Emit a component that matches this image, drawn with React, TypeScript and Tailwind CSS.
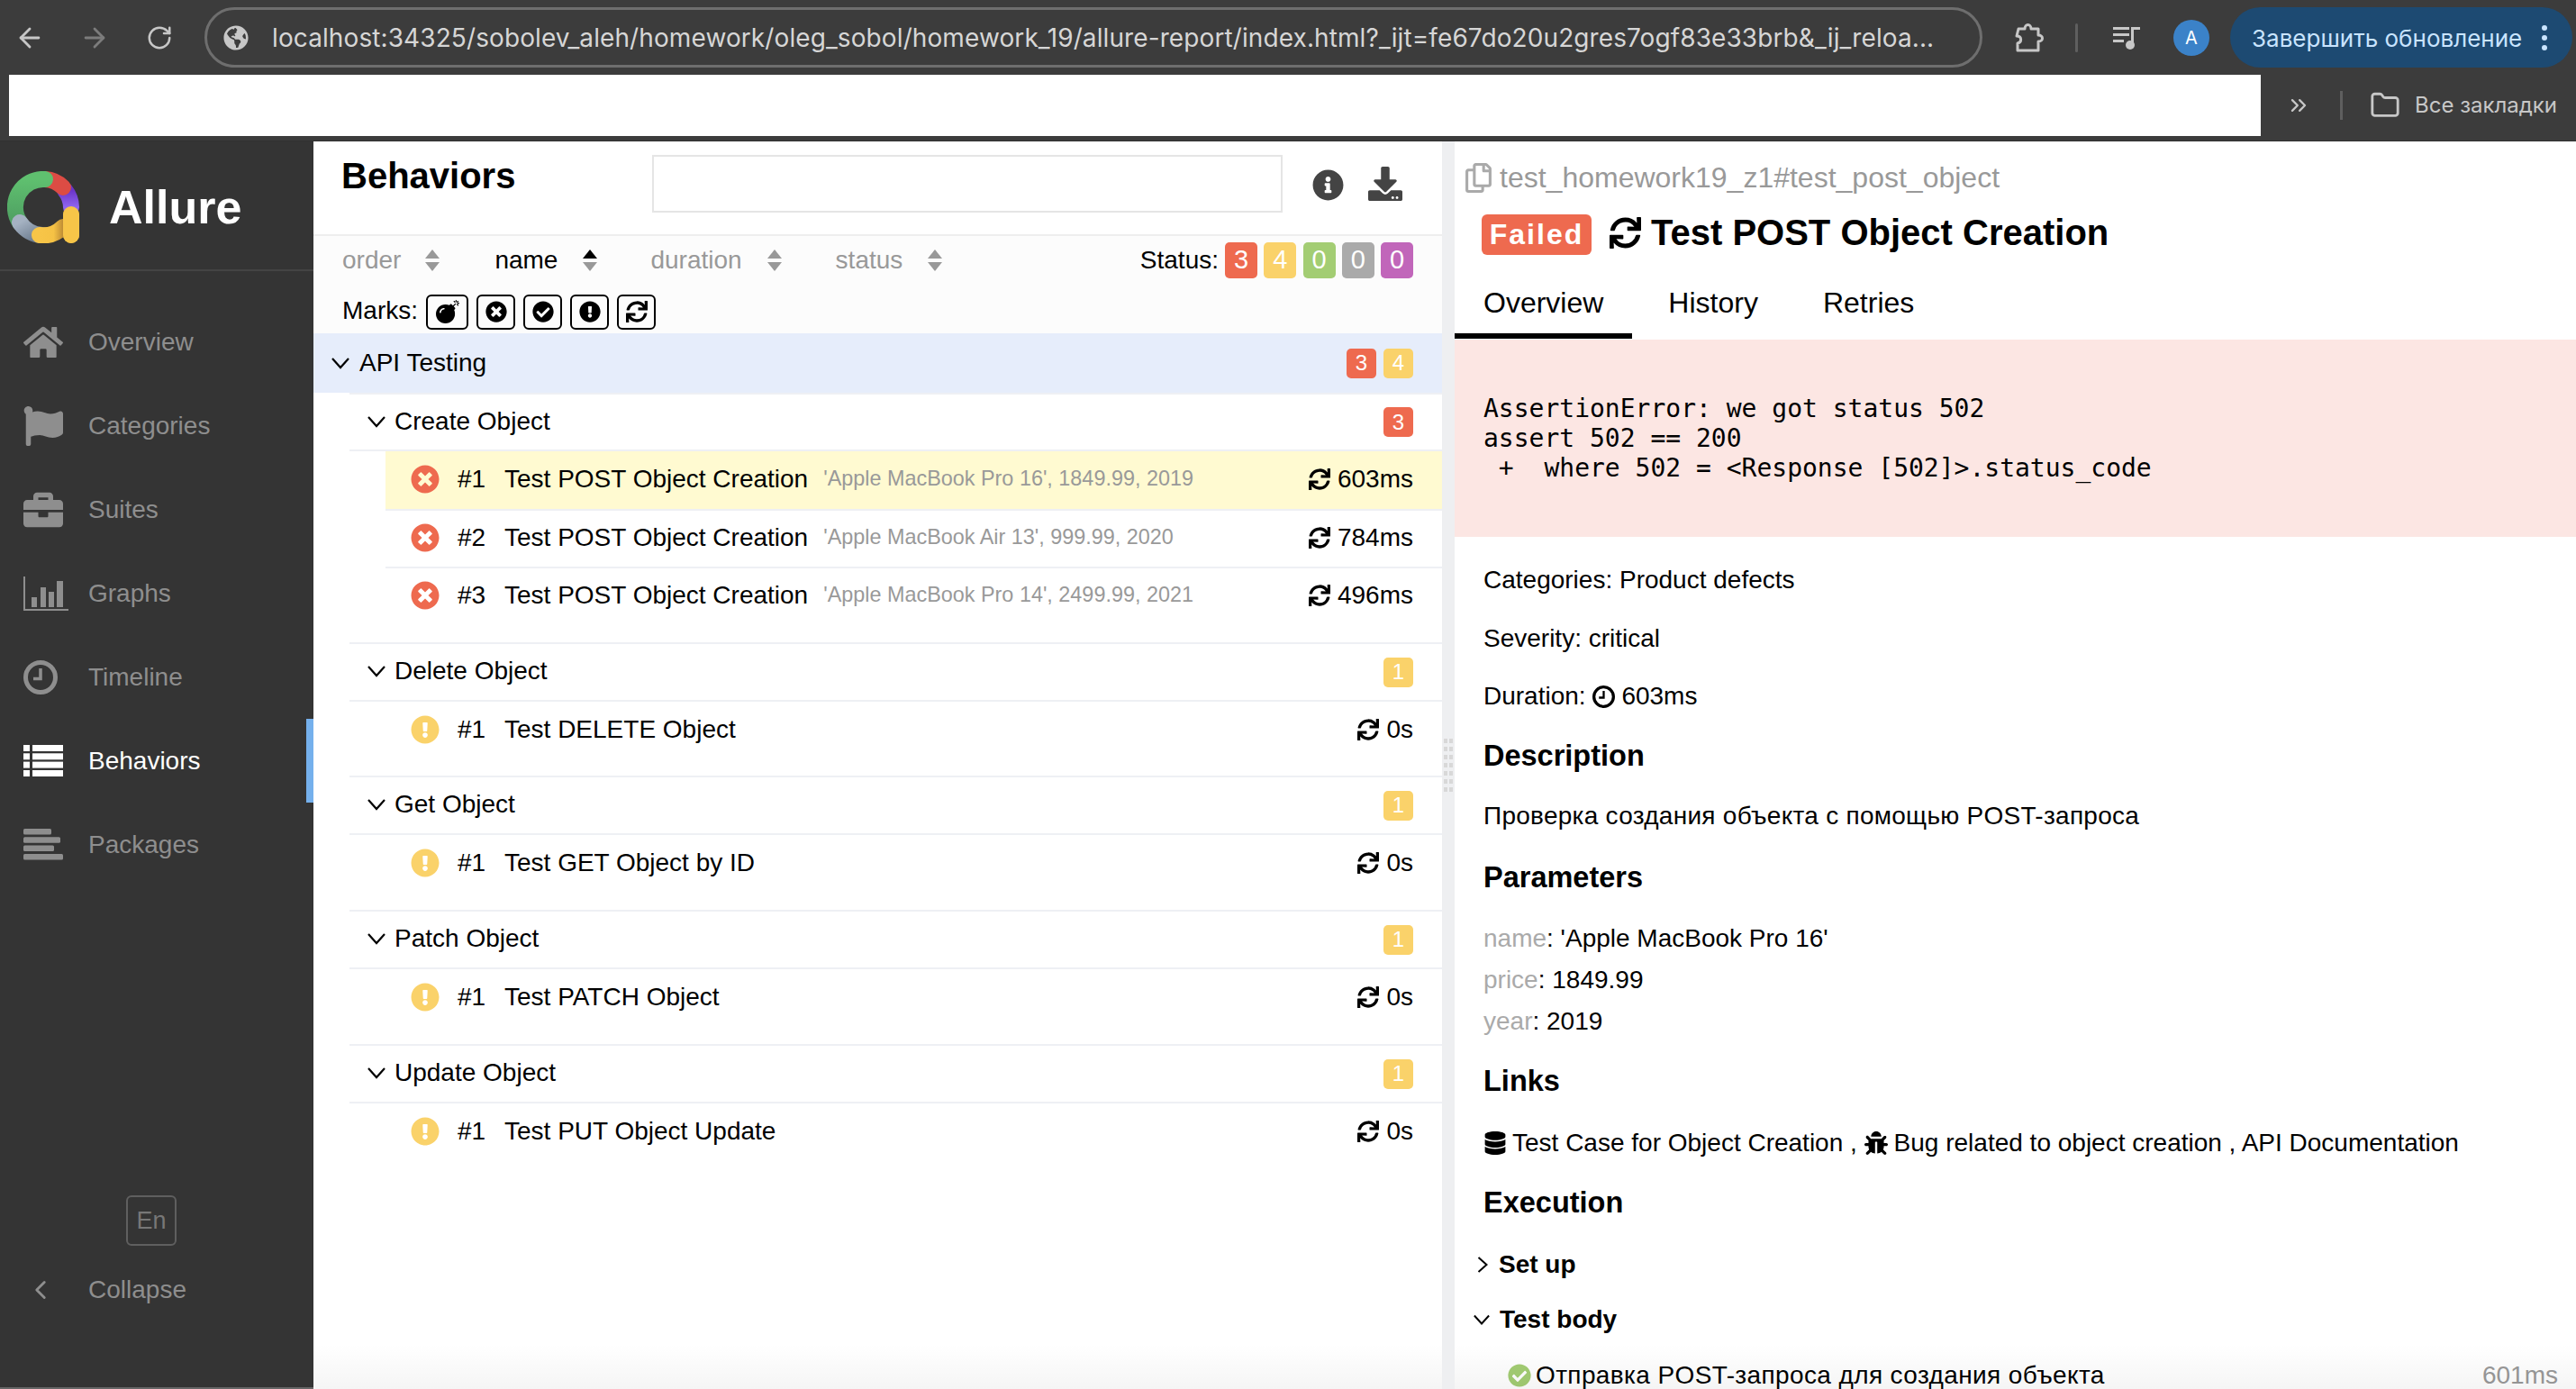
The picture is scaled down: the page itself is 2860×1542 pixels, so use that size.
import React from "react";
import { ArrowLeft, ArrowRight, RotateCw, ChevronsRight, Folder, ChevronLeft } from "lucide-react";
import {
  FaGlobeAmericas, FaHome, FaFlag, FaBriefcase, FaInfoCircle, FaDownload,
  FaBomb, FaTimesCircle, FaCheckCircle, FaExclamationCircle, FaSync, FaDatabase, FaBug, FaRegCopy,
} from "react-icons/fa";

const RED = "bg-[#ee6a4f]";
const YEL = "bg-[#fad26a]";

function Logo() {
  const c = { fill: "none", strokeWidth: 18, strokeLinecap: "round" as const };
  return (
    <svg width="80" height="80" viewBox="8 10 80 80">
      <defs>
        <linearGradient id="g1" x1="0" y1="0" x2="0" y2="1">
          <stop offset="0" stopColor="#5fc06f" />
          <stop offset="1" stopColor="#4f9f62" />
        </linearGradient>
        <linearGradient id="g2" x1="0" y1="0" x2="1" y2="0">
          <stop offset="0" stopColor="#f7c548" />
          <stop offset="0.6" stopColor="#f5c245" />
          <stop offset="1" stopColor="#bf8d35" />
        </linearGradient>
        <linearGradient id="g3" x1="0" y1="0" x2="1" y2="1">
          <stop offset="0" stopColor="#a5b2c2" />
          <stop offset="1" stopColor="#6f7f92" />
        </linearGradient>
        <linearGradient id="g4" x1="0" y1="0" x2="0" y2="1">
          <stop offset="0" stopColor="#6b34c8" />
          <stop offset="1" stopColor="#8f65f0" />
        </linearGradient>
      </defs>
      <path d="M79 60 L79 81" stroke="#f7c548" {...c} />
      <path d="M72 31 A31 31 0 0 1 79 50" stroke="url(#g4)" {...c} />
      <path d="M50 19 A31 31 0 0 1 70 28" stroke="#dc4c44" {...c} />
      <path d="M22 67 A31 31 0 0 1 50 19" stroke="url(#g1)" {...c} />
      <path d="M47 81 A31 31 0 0 1 22 67" stroke="url(#g3)" {...c} />
      <path d="M70 72 A31 31 0 0 1 44 81" stroke="url(#g2)" {...c} />
      <path d="M79 58 L79 81" stroke="#f7c548" {...c} />
    </svg>
  );
}

function ListIcon() {
  return (
    <svg width="44" height="35" viewBox="0 0 44 35" fill="currentColor">
      <rect x="0" y="0" width="7" height="7" />
      <rect x="10" y="0" width="34" height="7" />
      <rect x="0" y="9.3" width="7" height="7" />
      <rect x="10" y="9.3" width="34" height="7" />
      <rect x="0" y="18.6" width="7" height="7" />
      <rect x="10" y="18.6" width="34" height="7" />
      <rect x="0" y="28" width="7" height="7" />
      <rect x="10" y="28" width="34" height="7" />
    </svg>
  );
}

function PackagesIcon() {
  return (
    <svg width="44" height="35" viewBox="0 0 44 35" fill="currentColor">
      <rect x="0" y="0" width="31" height="6.5" rx="1.5" />
      <rect x="0" y="9.3" width="41" height="6.5" rx="1.5" />
      <rect x="0" y="18.6" width="34" height="6.5" rx="1.5" />
      <rect x="0" y="28" width="44" height="6.5" rx="1.5" />
    </svg>
  );
}

function GraphIcon() {
  return (
    <svg width="50" height="38" viewBox="0 0 50 38" fill="currentColor">
      <rect x="0" y="0" width="2" height="38" />
      <rect x="0" y="36" width="50" height="2" />
      <rect x="9" y="23" width="6" height="11" />
      <rect x="19" y="12" width="6" height="22" />
      <rect x="28" y="17" width="6" height="17" />
      <rect x="37" y="5" width="7" height="29" />
    </svg>
  );
}

function ClockIcon({ size, className = "" }: { size: number; className?: string }) {
  return (
    <svg width={size} height={size} viewBox="0 0 38 38" fill="none" stroke="currentColor" className={className}>
      <circle cx="19" cy="19" r="16.5" strokeWidth="5" />
      <path d="M19 9 V20.5 H11" strokeWidth="3.5" />
    </svg>
  );
}

function SortArrows({ active }: { active?: boolean }) {
  return (
    <svg width="18" height="24" viewBox="0 0 18 24" className="shrink-0">
      <path d="M9 0 L17 10 L1 10 Z" fill={active ? "#000" : "#999"} />
      <path d="M9 24 L17 14 L1 14 Z" fill="#999" />
    </svg>
  );
}

function Chevron({ open = true, className = "" }: { open?: boolean; className?: string }) {
  return (
    <svg width="20" height="20" viewBox="0 0 20 20" className={className} fill="none" stroke="#000" strokeWidth="2.2">
      {open ? <path d="M1 5 L10 15 L19 5" /> : <path d="M5 1 L15 10 L5 19" />}
    </svg>
  );
}

function PuzzleIcon() {
  return (
    <svg width="34" height="34" viewBox="0 0 34 34" fill="none" stroke="#c7c7c7" strokeWidth="3" strokeLinejoin="round">
      <path d="M5 7 H12 C12 1 19 1 19 7 H27 V14 C33 14 33 21 27 21 V31 H4 V23 C9 22 9 15 3 15 Z" />
    </svg>
  );
}

function MediaIcon() {
  return (
    <svg width="32" height="32" viewBox="0 0 32 32" fill="#c7c7c7">
      <rect x="1" y="4" width="18" height="3" />
      <rect x="1" y="11" width="18" height="3" />
      <rect x="1" y="18" width="12" height="3" />
      <rect x="21" y="4" width="10" height="3" />
      <rect x="21" y="4" width="3" height="20" />
      <circle cx="20" cy="24" r="5" />
    </svg>
  );
}

function Toolbar() {
  return (
    <div className="h-[83px] bg-[#3c3c3c] flex items-center shrink-0">
      <ArrowLeft className="ml-[16px] text-[#c7c7c7]" size={34} strokeWidth={2} />
      <ArrowRight className="ml-[38px] text-[#7c7c7c]" size={34} strokeWidth={2} />
      <RotateCw className="ml-[40px] text-[#c7c7c7]" size={30} strokeWidth={2} />
      <div className="ml-[35px] w-[1974px] h-[67px] rounded-[34px] border-[3px] border-[#6e6e6e] flex items-center pl-[18px] shrink-0">
        <FaGlobeAmericas className="text-[#c7c7c7] shrink-0" size={28} />
        <span className="ml-[26px] text-[#d6d6d6] text-[28px] whitespace-nowrap font-['Inter',sans-serif] tracking-[0.1px]">
          localhost:34325/sobolev_aleh/homework/oleg_sobol/homework_19/allure-report/index.html?_ijt=fe67do20u2gres7ogf83e33brb&_ij_reloa...
        </span>
      </div>
      <div className="ml-[35px]"><PuzzleIcon /></div>
      <div className="ml-[34px] w-[3px] h-[32px] bg-[#5f5f5f] rounded" />
      <div className="ml-[38px]"><MediaIcon /></div>
      <div className="ml-[36px] w-[40px] h-[40px] rounded-full bg-[#3b82c8] text-white flex items-center justify-center text-[20px] font-['Inter',sans-serif]">A</div>
      <div className="ml-[23px] w-[380px] h-[67px] rounded-[34px] bg-[#1d4a72] text-[#c9e4ff] flex items-center pl-[24px] shrink-0">
        <span className="pt-[2px] text-[26px] whitespace-nowrap font-['Inter',sans-serif]">Завершить обновление</span>
        <span className="ml-auto mr-[28px] flex flex-col gap-[5px]">
          <span className="w-[6px] h-[6px] rounded-full bg-[#c9e4ff]" />
          <span className="w-[6px] h-[6px] rounded-full bg-[#c9e4ff]" />
          <span className="w-[6px] h-[6px] rounded-full bg-[#c9e4ff]" />
        </span>
      </div>
    </div>
  );
}

function BookmarksBar() {
  return (
    <div className="h-[74px] bg-[#3c3c3c] shrink-0 flex items-start border-b border-[#303030]">
      <div className="ml-[10px] w-[2500px] h-[68px] bg-white shrink-0" />
      <div className="h-[68px] flex items-center text-[#c7c7c7]">
        <ChevronsRight className="ml-[28px]" size={28} strokeWidth={2} />
        <div className="ml-[32px] w-[3px] h-[32px] bg-[#5f5f5f]" />
        <Folder className="ml-[30px]" size={34} strokeWidth={2} />
        <span className="ml-[16px] text-[24px] whitespace-nowrap font-['Inter',sans-serif]">Все закладки</span>
      </div>
    </div>
  );
}

const navItems: [string, React.ReactNode, boolean?][] = [
  ["Overview", <FaHome size={44} />],
  ["Categories", <FaFlag size={44} />],
  ["Suites", <FaBriefcase size={44} />],
  ["Graphs", <GraphIcon />],
  ["Timeline", <ClockIcon size={38} />],
  ["Behaviors", <ListIcon />, true],
  ["Packages", <PackagesIcon />],
];

function Sidebar() {
  return (
    <aside className="w-[348px] shrink-0 bg-[#343434] flex flex-col border-b-2 border-[#666]">
      <div className="h-[144px] flex items-center border-b-2 border-[#444] pl-[8px] pt-[4px]">
        <Logo />
        <span className="ml-[33px] text-white text-[52px] font-bold leading-none">Allure</span>
      </div>
      <nav className="mt-[32px] flex flex-col">
        {navItems.map(([label, icon, active]) => (
          <div
            key={label}
            className={
              active
                ? "h-[93px] flex items-center pl-[26px] text-white border-r-[8px] border-[#75b0ec]"
                : "h-[93px] flex items-center pl-[26px] text-[#8e8e8e]"
            }
          >
            <span className="w-[72px] flex items-center shrink-0">{icon}</span>
            <span className="text-[28px]">{label}</span>
          </div>
        ))}
      </nav>
      <div className="mt-auto mb-[62px] flex flex-col">
        <div className="ml-[140px] mb-[2px] w-[56px] h-[56px] rounded-[6px] border-2 border-[#5f5f5f] flex items-center justify-center text-[#777] text-[27px]">En</div>
        <div className="h-[93px] flex items-center pl-[28px] text-[#8e8e8e]">
          <span className="w-[70px] shrink-0"><ChevronLeft size={34} strokeWidth={2} /></span>
          <span className="text-[28px]">Collapse</span>
        </div>
      </div>
    </aside>
  );
}

function Count({ n, cls }: { n: string; cls: string }) {
  return (
    <span className={`w-[33px] h-[33px] rounded-[5px] text-white text-[24px] flex items-center justify-center ${cls}`}>{n}</span>
  );
}

function StatusBadge({ n, cls }: { n: string; cls: string }) {
  return (
    <span className={`w-[36px] h-[40px] rounded-[5px] text-white text-[29px] flex items-center justify-center ${cls}`}>{n}</span>
  );
}

function Mark({ children, wide }: { children: React.ReactNode; wide?: boolean }) {
  return (
    <span className={`${wide ? "w-[47px]" : "w-[43px]"} h-[39px] rounded-[6px] border-2 border-black flex items-center justify-center`}>{children}</span>
  );
}

function TestRow({ num, name, params, time, kind, active, first }: {
  num: string; name: string; params?: string; time: string; kind: "fail" | "warn"; active?: boolean; first?: boolean;
}) {
  return (
    <div
      className={
        (active ? "bg-[#fffad1] " : "") +
        (first ? "" : "border-t-2 border-[#eef0f4] ") +
        "ml-[40px] h-[64px] flex items-center pl-[28px] pr-[32px] pb-[2px] text-[28px]"
      }
    >
      {kind === "fail" ? (
        <FaTimesCircle size={32} className="text-[#ee6a4f] shrink-0" />
      ) : (
        <FaExclamationCircle size={32} className="text-[#fad26a] shrink-0" />
      )}
      <span className="ml-[20px] w-[52px] shrink-0">{num}</span>
      <span className="whitespace-nowrap">{name}</span>
      {params && <span className="ml-[17px] text-[23.4px] text-[#999] whitespace-nowrap">{params}</span>}
      <span className="ml-auto flex items-center gap-[8px]">
        <FaSync size={24} />
        {time}
      </span>
    </div>
  );
}

function Group({ title, badge, badgeCls, children, className = "", headerH = "h-[66px]" }: {
  title: string; badge: string; badgeCls: string; children: React.ReactNode; className?: string; headerH?: string;
}) {
  return (
    <div className={`ml-[40px] ${className}`}>
      <div className={`${headerH} border-t-2 border-b-2 border-[#eef0f4] flex items-center pl-[20px] pr-[32px] text-[28px]`}>
        <Chevron className="mb-[2px]" />
        <span className="ml-[10px] mb-[2px]">{title}</span>
        <span className="ml-auto"><Count n={badge} cls={badgeCls} /></span>
      </div>
      <div className="-ml-[40px] pl-[40px]">{children}</div>
    </div>
  );
}

function Behaviors() {
  return (
    <section className="w-[1253px] shrink-0 bg-white flex flex-col relative text-black">
      <div className="h-[105px] shrink-0 border-b-2 border-[#eeeeee] flex items-start pl-[31px]">
        <h2 className="mt-[14px] w-[345px] text-[40px] font-bold leading-[48px]">Behaviors</h2>
        <div className="mt-[15px] w-[700px] h-[64px] border-2 border-[#e5e5e5]" />
        <FaInfoCircle size={35} className="ml-[33px] mt-[31px] text-[#444]" />
        <FaDownload size={38} className="ml-[27px] mt-[28px] text-[#444]" />
      </div>
      <div className="h-[108px] shrink-0 bg-[#fcfcfc] flex flex-col pl-[32px] pr-[32px] text-[28px]">
        <div className="h-[52px] flex items-center pt-[1px]">
          <span className="text-[#999]">order</span>
          <span className="ml-[26px]"><SortArrows /></span>
          <span className="ml-[60px]">name</span>
          <span className="ml-[27px]"><SortArrows active /></span>
          <span className="ml-[58px] text-[#999]">duration</span>
          <span className="ml-[27px]"><SortArrows /></span>
          <span className="ml-[59px] text-[#999]">status</span>
          <span className="ml-[27px]"><SortArrows /></span>
          <span className="ml-auto mr-[7px]">Status:</span>
          <span className="flex gap-[7.25px]">
            <StatusBadge n="3" cls={RED} />
            <StatusBadge n="4" cls={YEL} />
            <StatusBadge n="0" cls="bg-[#a3cd73]" />
            <StatusBadge n="0" cls="bg-[#aaaaaa]" />
            <StatusBadge n="0" cls="bg-[#c166ba]" />
          </span>
        </div>
        <div className="mt-[10px] flex items-center gap-[9px]">
          <span className="mb-[2px]">Marks:</span>
          <Mark wide><FaBomb size={26} /></Mark>
          <Mark><FaTimesCircle size={24} /></Mark>
          <Mark><FaCheckCircle size={24} /></Mark>
          <Mark><FaExclamationCircle size={24} /></Mark>
          <Mark><FaSync size={24} /></Mark>
        </div>
      </div>
      <div className="h-[66px] shrink-0 bg-[#e6edfb] flex items-center pl-[20px] pr-[32px] text-[28px]">
        <Chevron />
        <span className="ml-[11px]">API Testing</span>
        <span className="ml-auto flex gap-[8px]">
          <Count n="3" cls={RED} />
          <Count n="4" cls={YEL} />
        </span>
      </div>
      <Group title="Create Object" badge="3" badgeCls={RED} headerH="h-[65px]">
        <TestRow first active kind="fail" num="#1" name="Test POST Object Creation" params="'Apple MacBook Pro 16', 1849.99, 2019" time="603ms" />
        <TestRow kind="fail" num="#2" name="Test POST Object Creation" params="'Apple MacBook Air 13', 999.99, 2020" time="784ms" />
        <TestRow kind="fail" num="#3" name="Test POST Object Creation" params="'Apple MacBook Pro 14', 2499.99, 2021" time="496ms" />
      </Group>
      <Group className="mt-[20px]" title="Delete Object" badge="1" badgeCls={YEL}>
        <TestRow first kind="warn" num="#1" name="Test DELETE Object" time="0s" />
      </Group>
      <Group className="mt-[18px]" title="Get Object" badge="1" badgeCls={YEL}>
        <TestRow first kind="warn" num="#1" name="Test GET Object by ID" time="0s" />
      </Group>
      <Group className="mt-[19px]" title="Patch Object" badge="1" badgeCls={YEL}>
        <TestRow first kind="warn" num="#1" name="Test PATCH Object" time="0s" />
      </Group>
      <Group className="mt-[19px]" title="Update Object" badge="1" badgeCls={YEL}>
        <TestRow first kind="warn" num="#1" name="Test PUT Object Update" time="0s" />
      </Group>
      <div className="absolute left-0 right-0 bottom-0 h-[50px] bg-gradient-to-b from-transparent to-black/[0.04] pointer-events-none" />
    </section>
  );
}

function Divider() {
  return (
    <div className="w-[14px] shrink-0 bg-[#eeeff1] flex items-center justify-center">
      <div className="grid grid-cols-2 gap-x-[2px] gap-y-[4px]">
        {Array.from({ length: 14 }).map((_, i) => (
          <span key={i} className="w-[4px] h-[5px] bg-[#d8d8d8]" />
        ))}
      </div>
    </div>
  );
}

function Heading({ className, children }: { className: string; children: React.ReactNode }) {
  return <div className={`h-[64px] flex items-center text-[32.5px] font-bold ${className}`}>{children}</div>;
}

function Line({ className, children }: { className: string; children: React.ReactNode }) {
  return <div className={`h-[64px] flex items-center whitespace-pre ${className}`}>{children}</div>;
}

function Detail() {
  return (
    <section className="flex-1 min-w-0 bg-white relative text-black flex flex-col text-[28px]">
      <div className="h-[80px] shrink-0 flex items-center pl-[10px] text-[#999]">
        <FaRegCopy size={33} className="text-[#aaa]" />
        <span className="ml-[7px] text-[32px]">test_homework19_z1#test_post_object</span>
      </div>
      <div className="h-[42px] shrink-0 flex items-center pl-[30px]">
        <span className="mt-[4px] w-[122px] h-[45px] rounded-[6px] bg-[#ee6a4f] text-white text-[32px] font-bold flex items-center justify-center tracking-[2px]">Failed</span>
        <FaSync size={35} className="ml-[20px]" />
        <span className="ml-[11px] text-[40px] font-bold whitespace-nowrap">Test POST Object Creation</span>
      </div>
      <div className="mt-[17px] h-[80px] shrink-0 flex text-[32px]">
        <span className="h-[80px] border-b-[6px] border-black pt-[6px] px-[32px] flex items-center">Overview</span>
        <span className="ml-[8px] h-[80px] border-b-[6px] border-transparent pt-[6px] px-[32px] flex items-center">History</span>
        <span className="ml-[8px] h-[80px] border-b-[6px] border-transparent pt-[6px] px-[32px] flex items-center">Retries</span>
      </div>
      <pre className="mt-[1px] h-[219px] shrink-0 bg-[#fce6e3] pt-[60px] pl-[32px] text-[28px] leading-[33px] font-['DejaVu_Sans_Mono',monospace]">
        {"AssertionError: we got status 502\nassert 502 == 200\n +  where 502 = <Response [502]>.status_code"}
      </pre>
      <div className="pl-[32px] pr-[24px] flex flex-col">
        <Line className="mt-[16px]">Categories: Product defects</Line>
        <Line className="mt-[1px]">Severity: critical</Line>
        <Line className="">Duration: <ClockIcon size={25} className="mr-[7px]" />603ms</Line>
        <Heading className="mt-[2px]">Description</Heading>
        <Line className="mt-[3px] tracking-[0.27px]">Проверка создания объекта с помощью POST-запроса</Line>
        <Heading className="mt-[4px]">Parameters</Heading>
        <div className="mt-[13px] h-[46px] flex items-center whitespace-pre"><span className="text-[#aaa]">name</span>: 'Apple MacBook Pro 16'</div>
        <div className="h-[46px] flex items-center whitespace-pre"><span className="text-[#aaa]">price</span>: 1849.99</div>
        <div className="h-[46px] flex items-center whitespace-pre"><span className="text-[#aaa]">year</span>: 2019</div>
        <Heading className="mt-[11px]">Links</Heading>
        <Line className="mt-[5px]">
          <FaDatabase size={26} className="mr-[6px]" />Test Case for Object Creation , <FaBug size={26} className="mr-[7px]" />Bug related to object creation , API Documentation
        </Line>
        <Heading className="mt-[2px]">Execution</Heading>
        <div className="mt-[6px] h-[61px] flex items-center font-bold">
          <Chevron open={false} className="w-[18px] h-[20px] mr-[9px] -ml-[10px]" />Set up
        </div>
        <div className="h-[61px] flex items-center font-bold">
          <Chevron className="w-[22px] h-[18px] mr-[9px] -ml-[13px]" />Test body
        </div>
        <div className="h-[64px] flex items-center pl-[27px] -mr-[4px]">
          <FaCheckCircle size={26} className="text-[#a3cd73] mr-[5px]" />
          <span className="tracking-[0.38px]">Отправка POST-запроса для создания объекта</span>
          <span className="ml-auto text-[#999]">601ms</span>
        </div>
      </div>
      <div className="absolute left-0 right-0 bottom-0 h-[50px] bg-gradient-to-b from-transparent to-black/[0.04] pointer-events-none" />
    </section>
  );
}

export default function App() {
  return (
    <div className="w-[2860px] h-[1542px] overflow-hidden flex flex-col bg-[#3c3c3c] font-['Liberation_Sans','Noto_Sans_CJK_SC',sans-serif]">
      <Toolbar />
      <BookmarksBar />
      <div className="flex-1 min-h-0 flex">
        <Sidebar />
        <Behaviors />
        <Divider />
        <Detail />
      </div>
    </div>
  );
}
